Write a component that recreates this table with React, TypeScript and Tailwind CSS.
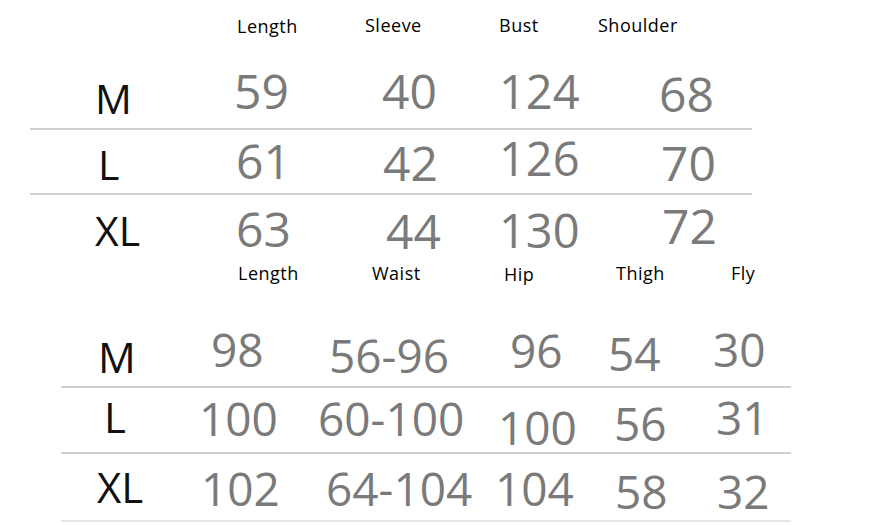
import React from "react";

const num = "shrink-0 whitespace-nowrap leading-none text-[#7a7a7a]";
const lab = "shrink-0 whitespace-nowrap leading-none text-[#111]";
const hd = "shrink-0 whitespace-nowrap leading-none text-[18px] text-black tracking-[0.5px] font-medium";

export default function App() {
  return (
    <div className="w-[889px] h-[525px] bg-white overflow-hidden font-['Open_Sans',sans-serif]">
      {/* Top table header */}
      <div className="flex h-[60px]">
        <div className="w-[237px] shrink-0" />
        <div className={`${hd} w-[128px] pt-[17px]`}>Length</div>
        <div className={`${hd} w-[134px] pt-[16px]`}>Sleeve</div>
        <div className={`${hd} w-[99px] pt-[16px]`}>Bust</div>
        <div className={`${hd} pt-[16px]`}>Shoulder</div>
      </div>
      {/* Row M */}
      <div className="flex h-[68px]">
        <div className="w-[95px] shrink-0" />
        <div className={`${lab} text-[41px] w-[139px] pt-[18px]`}>M</div>
        <div className={`${num} text-[48px] w-[148px] pt-[7px]`}>59</div>
        <div className={`${num} text-[48px] w-[117px] pt-[7px]`}>40</div>
        <div className={`${num} text-[47px] w-[160px] pt-[8px]`}>124</div>
        <div className={`${num} text-[48px] pt-[10px]`}>68</div>
      </div>
      <div className="ml-[30px] w-[722px] h-[2px] bg-[#d0d0d0]" />
      {/* Row L */}
      <div className="flex h-[63px]">
        <div className="w-[98px] shrink-0" />
        <div className={`${lab} text-[41px] w-[138px] pt-[14px]`}>L</div>
        <div className={`${num} text-[48px] w-[147px] pt-[7px]`}>61</div>
        <div className={`${num} text-[48px] w-[116px] pt-[9px]`}>42</div>
        <div className={`${num} text-[47px] w-[162px] pt-[5px]`}>126</div>
        <div className={`${num} text-[48px] pt-[9px]`}>70</div>
      </div>
      <div className="ml-[30px] w-[722px] h-[2px] bg-[#d0d0d0]" />
      {/* Row XL */}
      <div className="flex h-[63px]">
        <div className="w-[95px] shrink-0" />
        <div className={`${lab} text-[41px] w-[141px] pt-[15px]`}>XL</div>
        <div className={`${num} text-[48px] w-[150px] pt-[10px]`}>63</div>
        <div className={`${num} text-[48px] w-[113px] pt-[12px]`}>44</div>
        <div className={`${num} text-[47px] w-[163px] pt-[12px]`}>130</div>
        <div className={`${num} text-[48px] pt-[7px]`}>72</div>
      </div>

      {/* Bottom table header */}
      <div className="flex h-[42px]">
        <div className="w-[238px] shrink-0" />
        <div className={`${hd} w-[134px] pt-[6px]`}>Length</div>
        <div className={`${hd} w-[132px] pt-[6px]`}>Waist</div>
        <div className={`${hd} w-[112px] pt-[7px]`}>Hip</div>
        <div className={`${hd} w-[115px] pt-[6px]`}>Thigh</div>
        <div className={`${hd} pt-[6px]`}>Fly</div>
      </div>
      {/* Row M */}
      <div className="flex h-[86px]">
        <div className="w-[98px] shrink-0" />
        <div className={`${lab} text-[42px] w-[113px] pt-[36px]`}>M</div>
        <div className={`${num} text-[46px] w-[118px] pt-[26px]`}>98</div>
        <div className={`${num} text-[46px] w-[181px] pt-[32px]`}>56-96</div>
        <div className={`${num} text-[46px] w-[98px] pt-[27px]`}>96</div>
        <div className={`${num} text-[46px] w-[105px] pt-[30px]`}>54</div>
        <div className={`${num} text-[46px] pt-[26px]`}>30</div>
      </div>
      <div className="ml-[61px] w-[730px] h-[2px] bg-[#d0d0d0]" />
      {/* Row L */}
      <div className="flex h-[64px]">
        <div className="w-[104px] shrink-0" />
        <div className={`${lab} text-[42px] w-[95px] pt-[8px]`}>L</div>
        <div className={`${num} text-[46px] w-[119px] pt-[7px]`}>100</div>
        <div className={`${num} text-[46px] w-[180px] pt-[7px]`}>60-100</div>
        <div className={`${num} text-[46px] w-[116px] pt-[16px]`}>100</div>
        <div className={`${num} text-[46px] w-[102px] pt-[12px]`}>56</div>
        <div className={`${num} text-[46px] pt-[6px]`}>31</div>
      </div>
      <div className="ml-[61px] w-[730px] h-[2px] bg-[#d0d0d0]" />
      {/* Row XL */}
      <div className="flex h-[66px]">
        <div className="w-[97px] shrink-0" />
        <div className={`${lab} text-[42px] w-[104px] pt-[12px]`}>XL</div>
        <div className={`${num} text-[46px] w-[125px] pt-[11px]`}>102</div>
        <div className={`${num} text-[46px] w-[169px] pt-[11px]`}>64-104</div>
        <div className={`${num} text-[46px] w-[120px] pt-[11px]`}>104</div>
        <div className={`${num} text-[46px] w-[102px] pt-[14px]`}>58</div>
        <div className={`${num} text-[46px] pt-[14px]`}>32</div>
      </div>
      <div className="ml-[61px] w-[730px] h-[2px] bg-[#e6e6e6]" />
    </div>
  );
}
